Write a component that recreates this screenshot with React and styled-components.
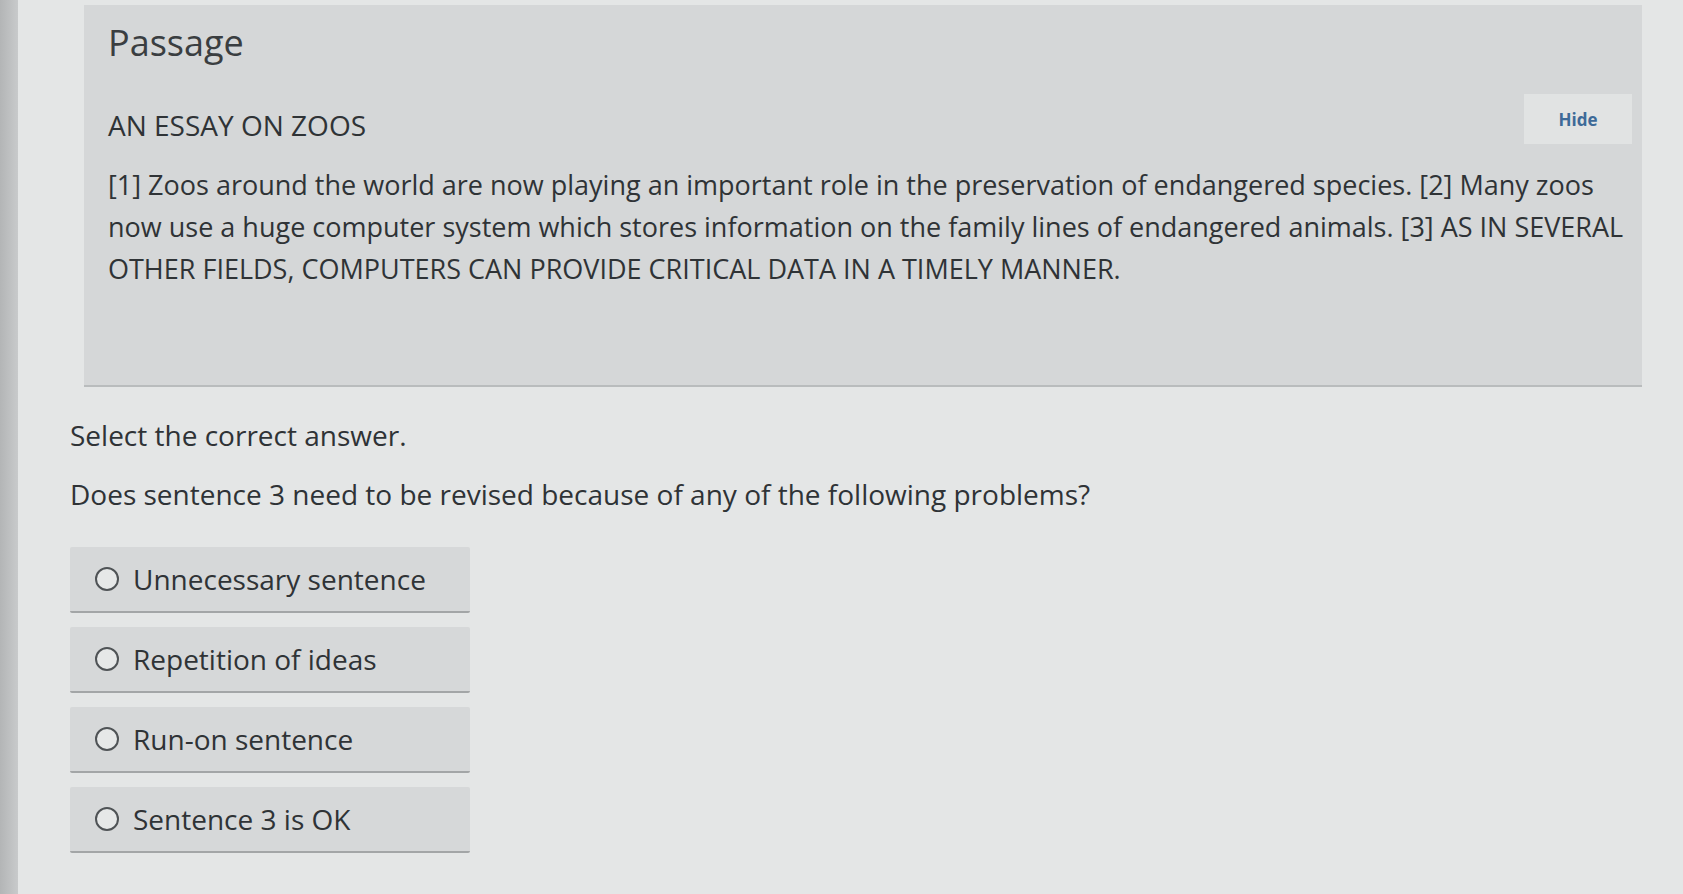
import React from "react";
import styled, { createGlobalStyle } from "styled-components";

const GlobalStyle = createGlobalStyle`
  html, body {
    margin: 0;
    padding: 0;
    background: #e4e6e6;
  }
  body {
    font-family: "Open Sans", "Noto Sans", Arial, sans-serif;
    color: #33373a;
  }
`;

const Page = styled.div`
  display: flex;
  min-height: 894px;
  width: 1683px;
  overflow: hidden;
`;

const Edge = styled.div`
  width: 18px;
  flex: none;
  background: linear-gradient(to right, #b3b5b6, #c8cacb);
`;

const Main = styled.div`
  flex: 1;
  display: flex;
  flex-direction: column;
  padding: 5px 41px 0 52px;
`;

const Panel = styled.section`
  margin-left: 14px;
  background: #d5d7d8;
  border-bottom: 2px solid #b9bcbd;
  padding: 14px 10px 95px 24px;
  display: flex;
  flex-direction: column;
`;

const PanelHeader = styled.div`
  display: flex;
  align-items: flex-end;
  justify-content: space-between;
`;

const Headings = styled.div`
  display: flex;
  flex-direction: column;
`;

const Title = styled.h2`
  margin: 0 0 39px;
  font-size: 36px;
  line-height: 48px;
  font-weight: 400;
  color: #3a3e41;
`;

const HideButton = styled.button`
  width: 108px;
  height: 50px;
  border: none;
  background: #e1e3e3;
  color: #3d6a98;
  font-family: inherit;
  font-size: 17px;
  font-weight: 700;
  cursor: pointer;
`;

const EssayTitle = styled.h3`
  margin: 0;
  font-size: 28px;
  line-height: 38px;
  font-weight: 400;
  color: #2f3336;
`;

const Paragraph = styled.p`
  margin: 20px 0 0;
  font-size: 27px;
  line-height: 42px;
  color: #2f3336;
  white-space: nowrap;
`;

const Prompt = styled.p`
  margin: ${p => p.$top}px 0 0;
  font-size: 28px;
  line-height: 38px;
  color: #2f3336;
`;

const Options = styled.div`
  margin-top: 34px;
  display: flex;
  flex-direction: column;
  gap: 14px;
`;

const Option = styled.label`
  width: 400px;
  height: 66px;
  box-sizing: border-box;
  display: flex;
  align-items: center;
  gap: 14px;
  padding-left: 25px;
  background: #d6d8d9;
  border-bottom: 2px solid #a3a6a7;
  border-radius: 2px;
  font-size: 28px;
  color: #2f3336;
  cursor: pointer;
`;

const Radio = styled.span`
  width: 24px;
  height: 24px;
  box-sizing: border-box;
  flex: none;
  border: 2px solid #4f5356;
  border-radius: 50%;
  background: #e6e8e8;
`;

const choices = [
  "Unnecessary sentence",
  "Repetition of ideas",
  "Run-on sentence",
  "Sentence 3 is OK",
];

export default function App() {
  return (
    <>
      <GlobalStyle />
      <Page>
        <Edge />
        <Main>
          <Panel>
            <PanelHeader>
              <Headings>
                <Title>Passage</Title>
                <EssayTitle>AN ESSAY ON ZOOS</EssayTitle>
              </Headings>
              <HideButton>Hide</HideButton>
            </PanelHeader>
            <Paragraph>
              [1] Zoos around the world are now playing an important role in the
              preservation of endangered species. [2] Many zoos
              <br />
              now use a huge computer system which stores information on the
              family lines of endangered animals. [3] AS IN SEVERAL
              <br />
              OTHER FIELDS, COMPUTERS CAN PROVIDE CRITICAL DATA IN A TIMELY MANNER.
            </Paragraph>
          </Panel>
          <Prompt $top={29}>Select the correct answer.</Prompt>
          <Prompt $top={21}>
            Does sentence 3 need to be revised because of any of the following problems?
          </Prompt>
          <Options>
            {choices.map(c => (
              <Option key={c}>
                <Radio />
                {c}
              </Option>
            ))}
          </Options>
        </Main>
      </Page>
    </>
  );
}
